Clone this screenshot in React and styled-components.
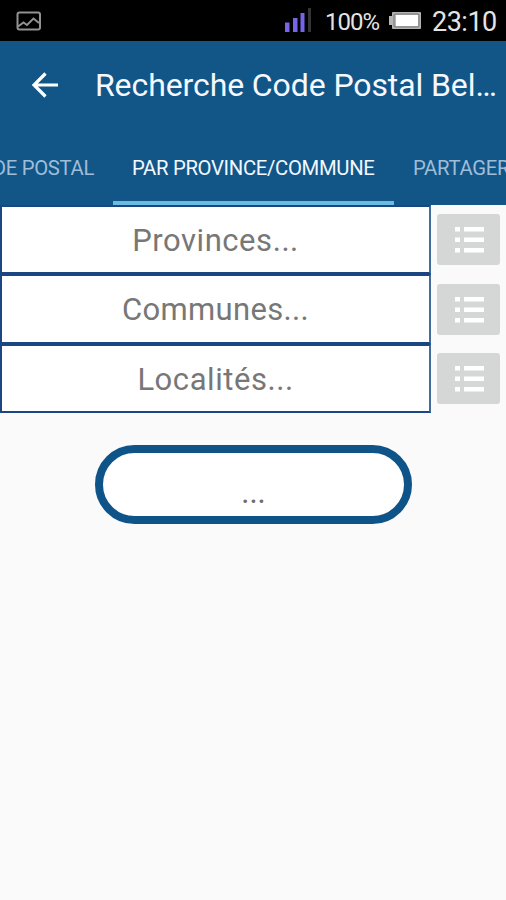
import React from "react";
import styled, { createGlobalStyle } from "styled-components";

const GlobalStyle = createGlobalStyle`
  * { box-sizing: border-box; }
  body { margin: 0; background: #fafafa; font-family: Roboto, "Noto Sans", sans-serif; }
`;

const Screen = styled.div`
  width: 506px;
  height: 900px;
  overflow: hidden;
  background: #fafafa;
  display: flex;
  flex-direction: column;
`;

const StatusBar = styled.div`
  flex: none;
  height: 41px;
  padding: 2px 9px 0 16px;
  background: #000;
  color: #e4e4e4;
  display: flex;
  align-items: center;
`;

const StatusIcon = styled.svg`
  display: block;
  flex: none;
  margin-left: ${(p) => p.$left || 0}px;
  margin-top: ${(p) => p.$top || 0}px;
`;

const StatusText = styled.span`
  font-size: ${(p) => p.$size}px;
  letter-spacing: ${(p) => p.$spacing || 0}px;
  width: ${(p) => p.$width}px;
  margin-left: ${(p) => p.$left}px;
  line-height: 30px;
  white-space: nowrap;
`;

const Spacer = styled.div`
  flex: 1;
`;

const Header = styled.header`
  flex: none;
  height: 164px;
  background: #125688;
  color: #f5f8ff;
`;

const TitleBar = styled.div`
  height: 89px;
  padding-left: 31px;
  display: flex;
  align-items: center;
`;

const BackButton = styled.button`
  border: 0;
  padding: 0 0 2px;
  background: none;
  width: 64px;
  height: 40px;
  display: flex;
  align-items: center;
  color: #fff;
`;

const Title = styled.h1`
  margin: 0;
  padding-bottom: 2px;
  font-weight: 400;
  font-size: 32px;
  letter-spacing: -0.1px;
  line-height: 40px;
  white-space: nowrap;
`;

const Tabs = styled.nav`
  height: 75px;
  display: flex;
  justify-content: flex-start;
  width: 660px;
  margin-left: -127px;
`;

const Tab = styled.div`
  flex: none;
  width: ${(p) => p.$width}px;
  height: 75px;
  padding: 0 19px;
  font-size: 20.3px;
  line-height: 76px;
  letter-spacing: -0.32px;
  text-align: ${(p) => p.$align || "left"};
  white-space: nowrap;
  color: ${(p) => (p.$active ? "#f2f8ff" : "#9fbdd8")};
  border-bottom: 4px solid ${(p) => (p.$active ? "#6bbbe0" : "transparent")};
`;

const Form = styled.main`
  display: flex;
  flex-direction: column;
`;

const Row = styled.div`
  display: flex;
  height: ${(p) => p.$height}px;
`;

const Field = styled.div`
  width: 431px;
  border: 2px solid #1b4583;
  border-right-color: #426c9e;
  background: #fff;
  color: #777;
  font-size: 31px;
  letter-spacing: ${(p) => p.$spacing}px;
  line-height: 68px;
  text-align: center;
  white-space: nowrap;
`;

const ListButton = styled.button`
  border: 0;
  padding: 0 0 0 2px;
  width: 63px;
  height: 51px;
  margin: ${(p) => p.$top}px 0 0 6px;
  border-radius: 3px;
  background: #d5d7d6;
  display: flex;
  align-items: center;
  justify-content: center;
`;

const Result = styled.div`
  width: 317px;
  height: 79px;
  margin: 32px 0 0 95px;
  border: 8px solid #0f5488;
  border-radius: 40px;
  background: #fff;
  color: #6c6c6c;
  font-size: 31px;
  line-height: 79px;
  text-align: center;
`;

const ListIcon = () => (
  <svg width="29" height="26" viewBox="0 0 29 26" fill="#fff">
    <path d="M0 0h5v4.500H0zM9 0h20v4.500H9zM0 10.500h5V15H0zM9 10.500h20V15H9zM0 21h5v4.500H0zM9 21h20v4.500H9z" />
  </svg>
);

const fields = [
  { label: "Provinces...", height: 69, spacing: 0.55, top: 9 },
  { label: "Communes...", height: 70, spacing: 0.35, top: 10 },
  { label: "Localités...", height: 69, spacing: 0.55, top: 9 },
];

export default function App() {
  return (
    <Screen>
      <GlobalStyle />
      <StatusBar>
        <StatusIcon width="25" height="20" viewBox="0 0 25 20" fill="none" stroke="#929292" strokeWidth="2" $top={-2}>
          <rect x="1.5" y="1.5" width="22.5" height="17" rx="2" />
          <path d="M2 15.500l5.500-4 3.500 2.500 6.500-6.500L23 12" />
        </StatusIcon>
        <Spacer />
        <StatusIcon width="28" height="26" viewBox="0 0 28 26" fill="#7565e8" $top={-4}>
          <path d="M0 15.500h4.500V25H0zM8 11h4.500v14H8zM15.500 6h4v19h-4z" />
          <path d="M23 1h3v24h-3z" fill="#343434" />
        </StatusIcon>
        <StatusText $size={24} $width={54} $left={12} $spacing={-1}>100%</StatusText>
        <StatusIcon width="32" height="19" viewBox="0 0 32 19" $left={10} $top={-3}>
          <path d="M0 5h3V2q0-1 1-1h27q1 0 1 1v15q0 1-1 1H4q-1 0-1-1v-3H0z" fill="#b4b4b4" />
          <rect x="5" y="3" width="25" height="13" rx="1" fill="none" stroke="#777" />
          <rect x="7" y="4" width="22" height="11" fill="#fff" />
        </StatusIcon>
        <StatusText $size={27} $width={65} $left={11} $spacing={-0.5}>23:10</StatusText>
      </StatusBar>
      <Header>
        <TitleBar>
          <BackButton aria-label="Retour">
            <svg width="28" height="28" viewBox="0 0 28 28" fill="none" stroke="currentColor" strokeWidth="3.2">
              <path d="M27 14H4M14.500 2.500L3 14l11.500 11.500" />
            </svg>
          </BackButton>
          <Title>Recherche Code Postal Bel…</Title>
        </TitleBar>
        <Tabs>
          <Tab $width={240} $align="right">PAR CODE POSTAL</Tab>
          <Tab $width={281} $active>PAR PROVINCE/COMMUNE</Tab>
          <Tab $width={139}>PARTAGER</Tab>
        </Tabs>
      </Header>
      <Form>
        {fields.map((f) => (
          <Row key={f.label} $height={f.height}>
            <Field $spacing={f.spacing}>{f.label}</Field>
            <ListButton aria-label={f.label} $top={f.top}>
              <ListIcon />
            </ListButton>
          </Row>
        ))}
        <Result>...</Result>
      </Form>
    </Screen>
  );
}
